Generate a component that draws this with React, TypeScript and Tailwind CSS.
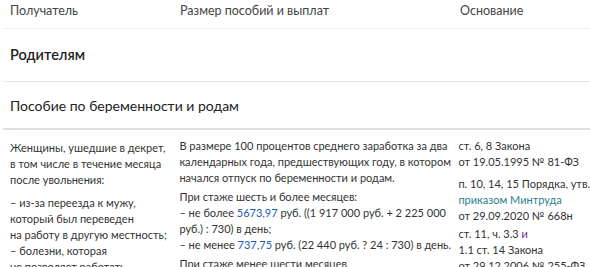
const link = 'text-[#1a5bb5]'

export default function App() {
  const font = { fontFamily: 'Lato, "Liberation Sans", sans-serif' }
  return (
    <div className="w-[590px] h-[267px] overflow-hidden bg-white text-[#333]" style={font}>
      <div className="ml-[3px]">
        {/* HEADER */}
        <div className="flex h-[29px] items-center pb-[5px] border-b border-[#f0f0f0] text-[12.5px] text-[#444]">
          <div className="w-[177px] pl-[7px]">Получатель</div>
          <div className="w-[280px]">Размер пособий и выплат</div>
          <div>Основание</div>
        </div>

        {/* SECTION */}
        <div className="flex h-[53px] items-center border-b border-[#e8e8e8] pl-[7px] text-[14.5px] font-semibold text-[#222]">
          Родителям
        </div>

        <div className="flex h-[48px] items-center border-b-2 border-[#e2e0da] pl-[7px] text-[14px] text-[#222]">
          Пособие по беременности и родам
        </div>

        {/* BODY */}
        <div className="flex pt-[7px] text-[11px] leading-[16px] whitespace-nowrap">
          <div className="w-[177px] pl-[7px] pt-[3px] space-y-[7px]">
            <p>
              Женщины, ушедшие в декрет,
              <br />в том числе в течение месяца
              <br />после увольнения:
            </p>
            <p>
              – из-за переезда к мужу,
              <br />который был переведен
              <br />на работу в другую местность;
              <br />– болезни, которая
              <br />не позволяет работать
            </p>
          </div>
          <div className="w-[280px] pt-[1px] space-y-[3px]">
            <p>
              В размере 100 процентов среднего заработка за два
              <br />календарных года, предшествующих году, в котором
              <br />начался отпуск по беременности и родам.
            </p>
            <p>
              При стаже шесть и более месяцев:
              <br />– не более <span className={link}>5673,97</span> руб. ((1 917 000 руб. + 2 225 000
              <br />руб.) : 730) в день;
              <br />– не менее <span className={link}>737,75</span> руб. (22 440 руб. ? 24 : 730) в день.
            </p>
            <p>При стаже менее шести месяцев</p>
          </div>
          <div className="flex-1 pt-[1px]">
            <p>
              ст. 6, 8 Закона
              <br />
              от 19.05.1995 № 81-ФЗ
            </p>
            <p className="mt-[6px]">
              п. 10, 14, 15 Порядка, утв.
              <br />
              <span className="text-[#2a7f8c]">приказом Минтруда</span>
              <br />
              от 29.09.2020 № 668н
            </p>
            <p className="mt-[2px]">
              ст. 11, ч. 3.3 <span className="text-[#6a2a8c]">и</span>
              <br />
              1.1 ст. 14 Закона
              <br />
              от 29.12.2006 № 255-ФЗ
            </p>
          </div>
        </div>
      </div>
    </div>
  )
}
